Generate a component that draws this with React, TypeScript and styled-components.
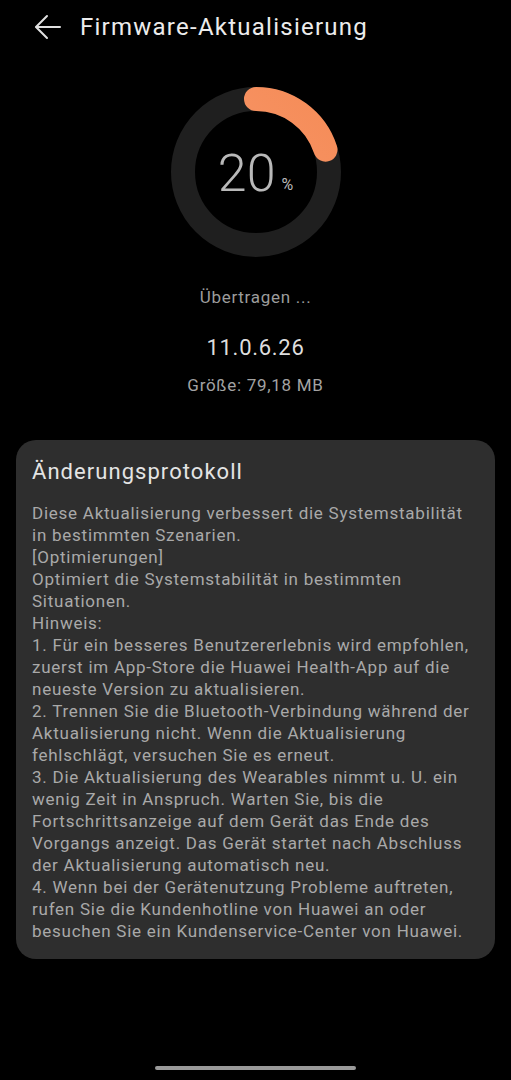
import React from "react";
import styled, { createGlobalStyle } from "styled-components";

const Global = createGlobalStyle`
  html, body { margin: 0; padding: 0; background: #000; }
  body { font-family: Roboto, "Noto Sans", "Liberation Sans", sans-serif; -webkit-font-smoothing: antialiased; letter-spacing: 0.045em; }
`;

const Page = styled.div`
  min-height: 1080px;
  box-sizing: border-box;
  display: flex;
  flex-direction: column;
  align-items: stretch;
  background: #000;
`;

const Header = styled.header`
  height: 54px;
  display: flex;
  align-items: center;
  padding-left: 34px;
  gap: 18px;
`;

const BackButton = styled.button`
  background: none;
  border: none;
  padding: 0;
  width: 28px;
  height: 28px;
  display: flex;
  align-items: center;
  justify-content: center;
  color: #e0e0e0;
`;

const Title = styled.h1`
  margin: 0;
  font-size: 24px;
  font-weight: 400;
  color: #ececec;
  letter-spacing: 1.25px;
`;

const Progress = styled.section`
  display: flex;
  flex-direction: column;
  align-items: center;
`;

const RingWrap = styled.div`
  position: relative;
  width: 170px;
  height: 170px;
  margin-top: 33px;
`;

const RingLabel = styled.div`
  position: absolute;
  inset: 0;
  display: flex;
  align-items: center;
  justify-content: center;
  padding-top: 3px;
  color: #b9b9b9;
  letter-spacing: 0;
`;

const Percent = styled.span`
  font-size: 52px;
  font-weight: 300;
  line-height: 1;
`;

const PercentSign = styled.span`
  font-size: 16px;
  font-weight: 400;
  margin-left: 6px;
  align-self: center;
  margin-top: 22px;
`;

const Status = styled.div<{ $size: number; $color: string; $mt: number }>`
  font-size: ${(p) => p.$size}px;
  line-height: ${(p) => Math.round(p.$size * 1.3)}px;
  color: ${(p) => p.$color};
  margin-top: ${(p) => p.$mt}px;
`;

const Card = styled.section`
  margin: 44px 16px 0;
  background: #2e2e2e;
  border-radius: 20px;
  padding: 18px 16px 17px;
`;

const CardTitle = styled.h2`
  margin: 0;
  font-size: 22px;
  line-height: 28px;
  font-weight: 400;
  color: #e4e4e4;
  letter-spacing: 1.05px;
`;

const Body = styled.div`
  margin-top: 16px;
  font-size: 17px;
  line-height: 22px;
  color: #a9a9a9;
  letter-spacing: 0.75px;
`;

const Line = styled.div`
  white-space: nowrap;
`;

const HomeIndicator = styled.div`
  margin: auto auto 10px;
  width: 201px;
  height: 4px;
  border-radius: 2px;
  background: #9a9a9a;
`;

const lines = [
  "Diese Aktualisierung verbessert die Systemstabilität",
  "in bestimmten Szenarien.",
  "[Optimierungen]",
  "Optimiert die Systemstabilität in bestimmten",
  "Situationen.",
  "Hinweis:",
  "1. Für ein besseres Benutzererlebnis wird empfohlen,",
  "zuerst im App-Store die Huawei Health-App auf die",
  "neueste Version zu aktualisieren.",
  "2. Trennen Sie die Bluetooth-Verbindung während der",
  "Aktualisierung nicht. Wenn die Aktualisierung",
  "fehlschlägt, versuchen Sie es erneut.",
  "3. Die Aktualisierung des Wearables nimmt u. U. ein",
  "wenig Zeit in Anspruch. Warten Sie, bis die",
  "Fortschrittsanzeige auf dem Gerät das Ende des",
  "Vorgangs anzeigt. Das Gerät startet nach Abschluss",
  "der Aktualisierung automatisch neu.",
  "4. Wenn bei der Gerätenutzung Probleme auftreten,",
  "rufen Sie die Kundenhotline von Huawei an oder",
  "besuchen Sie ein Kundenservice-Center von Huawei.",
];

function Ring({ value }: { value: number }) {
  const r = 73;
  const c = 2 * Math.PI * r;
  const len = (value / 100) * c;
  return (
    <svg width="170" height="170" viewBox="0 0 170 170">
      <defs>
        <linearGradient id="arc" x1="0" y1="0" x2="1" y2="1">
          <stop offset="0%" stopColor="#f99a70" />
          <stop offset="100%" stopColor="#f58c58" />
        </linearGradient>
      </defs>
      <circle cx="85" cy="85" r={r} fill="none" stroke="#1f1f1f" strokeWidth="24" />
      <circle
        cx="85"
        cy="85"
        r={r}
        fill="none"
        stroke="url(#arc)"
        strokeWidth="24"
        strokeLinecap="round"
        strokeDasharray={`${len} ${c}`}
        transform="rotate(-90 85 85)"
      />
    </svg>
  );
}

export default function App() {
  return (
    <>
      <Global />
      <Page>
        <Header>
          <BackButton aria-label="Zurück">
            <svg width="28" height="26" viewBox="0 0 28 26" fill="none" stroke="currentColor" strokeWidth="2" strokeLinecap="round" strokeLinejoin="round">
              <path d="M26 13H2.5" />
              <path d="M13 2L2 13l11 11" />
            </svg>
          </BackButton>
          <Title>Firmware-Aktualisierung</Title>
        </Header>
        <Progress>
          <RingWrap>
            <Ring value={20} />
            <RingLabel>
              <Percent>20</Percent>
              <PercentSign>%</PercentSign>
            </RingLabel>
          </RingWrap>
          <Status $size={17} $color="#9c9c9c" $mt={29}>Übertragen ...</Status>
          <Status $size={22} $color="#dedede" $mt={25}>11.0.6.26</Status>
          <Status $size={17} $color="#a3a3a3" $mt={12}>Größe: 79,18 MB</Status>
        </Progress>
        <Card>
          <CardTitle>Änderungsprotokoll</CardTitle>
          <Body>
            {lines.map((l, i) => (
              <Line key={i}>{l}</Line>
            ))}
          </Body>
        </Card>
        <HomeIndicator />
      </Page>
    </>
  );
}
